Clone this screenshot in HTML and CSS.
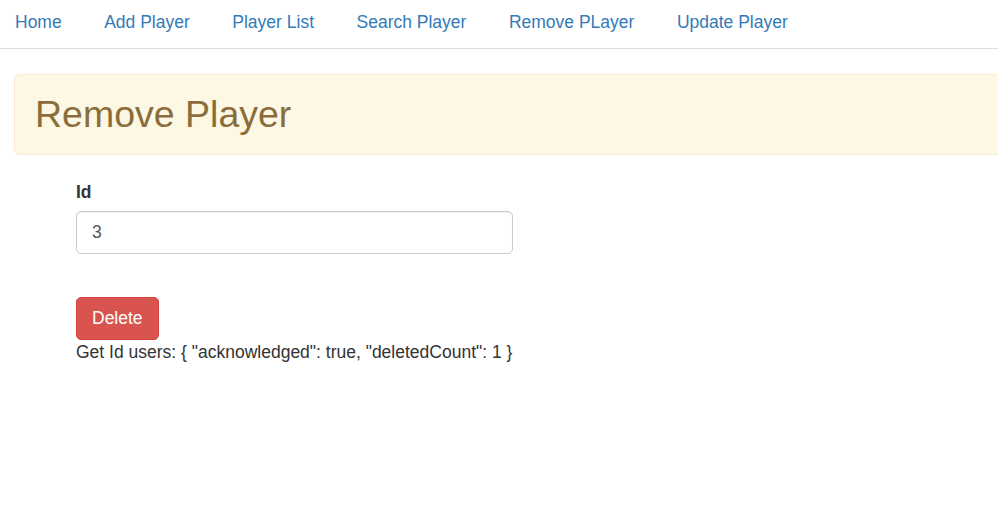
FILE: index.html
```html
<!DOCTYPE html>
<html lang="en">
<head>
<meta charset="utf-8">
<title>Remove Player</title>
<link rel="stylesheet" href="styles.css">
</head>
<body>
<nav class="topnav">
  <ul class="nav-list">
    <li><a href="#">Home</a></li>
    <li><a href="#">Add Player</a></li>
    <li><a href="#">Player List</a></li>
    <li><a href="#">Search Player</a></li>
    <li><a href="#">Remove PLayer</a></li>
    <li><a href="#">Update Player</a></li>
  </ul>
</nav>
<div class="banner">
  <h2 class="banner-title">Remove Player</h2>
</div>
<form class="remove-form">
  <div class="form-group">
    <label class="form-label" for="pid">Id</label>
    <input class="form-input" id="pid" type="text" value="3">
  </div>
  <button class="btn-danger" type="button">Delete</button>
  <p class="result">Get Id users: { "acknowledged": true, "deletedCount": 1 }</p>
</form>
</body>
</html>
```
FILE: styles.css
```css
html, body {
  margin: 0;
  padding: 0;
  background: #fff;
  overflow: hidden;
}
body {
  font-family: "Liberation Sans", Arial, Helvetica, sans-serif;
  font-size: 17.5px;
  line-height: 25px;
  color: #333;
}
.topnav {
  border-bottom: 1px solid #ddd;
}
.nav-list {
  list-style: none;
  margin: 0;
  padding: 0 0 0 15px;
  display: flex;
  gap: 42.5px;
}
.nav-list a {
  display: block;
  padding: 10px 0 13px;
  color: #337ab7;
  text-decoration: none;
}
.banner {
  margin: 25px -30px 0 14px;
  padding: 18.75px 20px;
  background: #fcf8e3;
  border: 1px solid #faebcc;
  border-radius: 5px;
  color: #8a6d3b;
}
.banner-title {
  margin: 0;
  font-size: 37.5px;
  line-height: 41.25px;
  font-weight: 500;
}
.remove-form {
  margin: 25px 0 0 76px;
  width: 437px;
}
.form-group {
  display: flex;
  flex-direction: column;
  align-items: flex-start;
}
.form-label {
  font-weight: bold;
  margin-bottom: 6.25px;
}
.form-input {
  box-sizing: border-box;
  width: 437px;
  height: 42.5px;
  padding: 7.5px 15px;
  font-family: inherit;
  font-size: 17.5px;
  line-height: 25px;
  color: #555;
  border: 1px solid #ccc;
  border-radius: 5px;
  box-shadow: inset 0 1px 1px rgba(0,0,0,.075);
  outline: none;
}
.btn-danger {
  display: block;
  margin-top: 43.5px;
  box-sizing: border-box;
  height: 42.5px;
  padding: 7.5px 15px;
  font-family: inherit;
  font-size: 17.5px;
  line-height: 25px;
  color: #fff;
  background: #d9534f;
  border: 1px solid #d43f3a;
  border-radius: 5px;
}
.result {
  margin: 0;
  white-space: nowrap;
}
```
